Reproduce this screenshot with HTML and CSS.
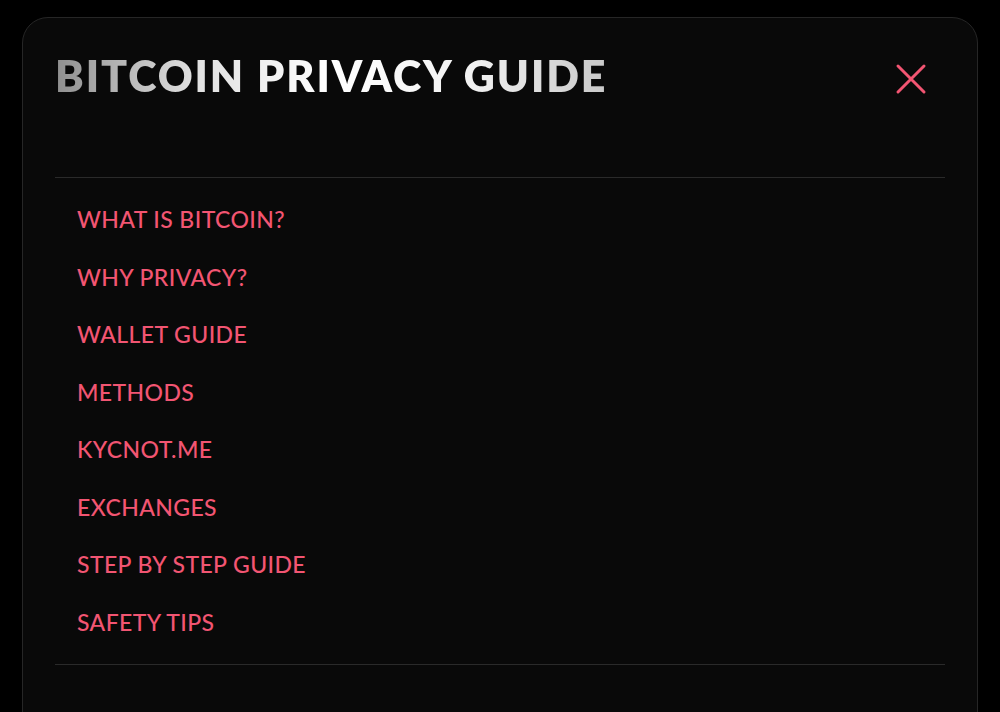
FILE: index.html
```html
<!DOCTYPE html>
<html lang="en">
<head>
<meta charset="utf-8">
<title>Bitcoin Privacy Guide</title>
<link rel="stylesheet" href="styles.css">
</head>
<body>
<div class="card">
  <header class="head">
    <h1 class="title">BITCOIN PRIVACY GUIDE</h1>
    <button class="close" aria-label="Close">
      <svg width="32" height="32" viewBox="0 0 32 32"><path d="M3 3 L29 29 M29 3 L3 29" stroke="#f25572" stroke-width="3" stroke-linecap="round" fill="none"/></svg>
    </button>
  </header>
  <nav class="menu">
    <a href="#">WHAT IS BITCOIN?</a>
    <a href="#">WHY PRIVACY?</a>
    <a href="#">WALLET GUIDE</a>
    <a href="#">METHODS</a>
    <a href="#">KYCNOT.ME</a>
    <a href="#">EXCHANGES</a>
    <a href="#">STEP BY STEP GUIDE</a>
    <a href="#">SAFETY TIPS</a>
  </nav>
</div>
</body>
</html>
```
FILE: styles.css
```css
html, body {
  margin: 0;
  padding: 0;
  background: #000;
  height: 100%;
  overflow: hidden;
}
body {
  font-family: "Lato", "Open Sans", sans-serif;
}
.card {
  margin: 17px 22px 0 22px;
  min-height: 760px;
  background: #090909;
  border: 1px solid #262626;
  border-radius: 26px;
  padding: 32px 32px 0 32px;
  box-sizing: border-box;
}
.head {
  display: flex;
  align-items: flex-start;
  justify-content: space-between;
  border-bottom: 1px solid #2a2a2a;
  padding-bottom: 75px;
}
.title {
  margin: 0;
  font-size: 43px;
  line-height: 52px;
  font-weight: 800;
  letter-spacing: 1.9px;
  background: linear-gradient(90deg, #8f8f8f 0%, #e0e0e0 25%, #ffffff 50%, #f2f2f2 75%, #c9c9c9 100%);
  -webkit-background-clip: text;
  background-clip: text;
  color: transparent;
}
.close {
  background: none;
  border: 0;
  padding: 0;
  margin: 13px 18px 0 0;
  width: 32px;
  height: 32px;
  cursor: pointer;
}
.close svg { display: block; }
.menu {
  display: flex;
  flex-direction: column;
  padding: 13px 0 13px 22px;
  border-bottom: 1px solid #2a2a2a;
}
.menu a {
  display: block;
  color: #f25572;
  text-decoration: none;
  font-size: 23px;
  line-height: 57.5px;
  font-weight: 500;
  letter-spacing: 0.4px;
}
```
